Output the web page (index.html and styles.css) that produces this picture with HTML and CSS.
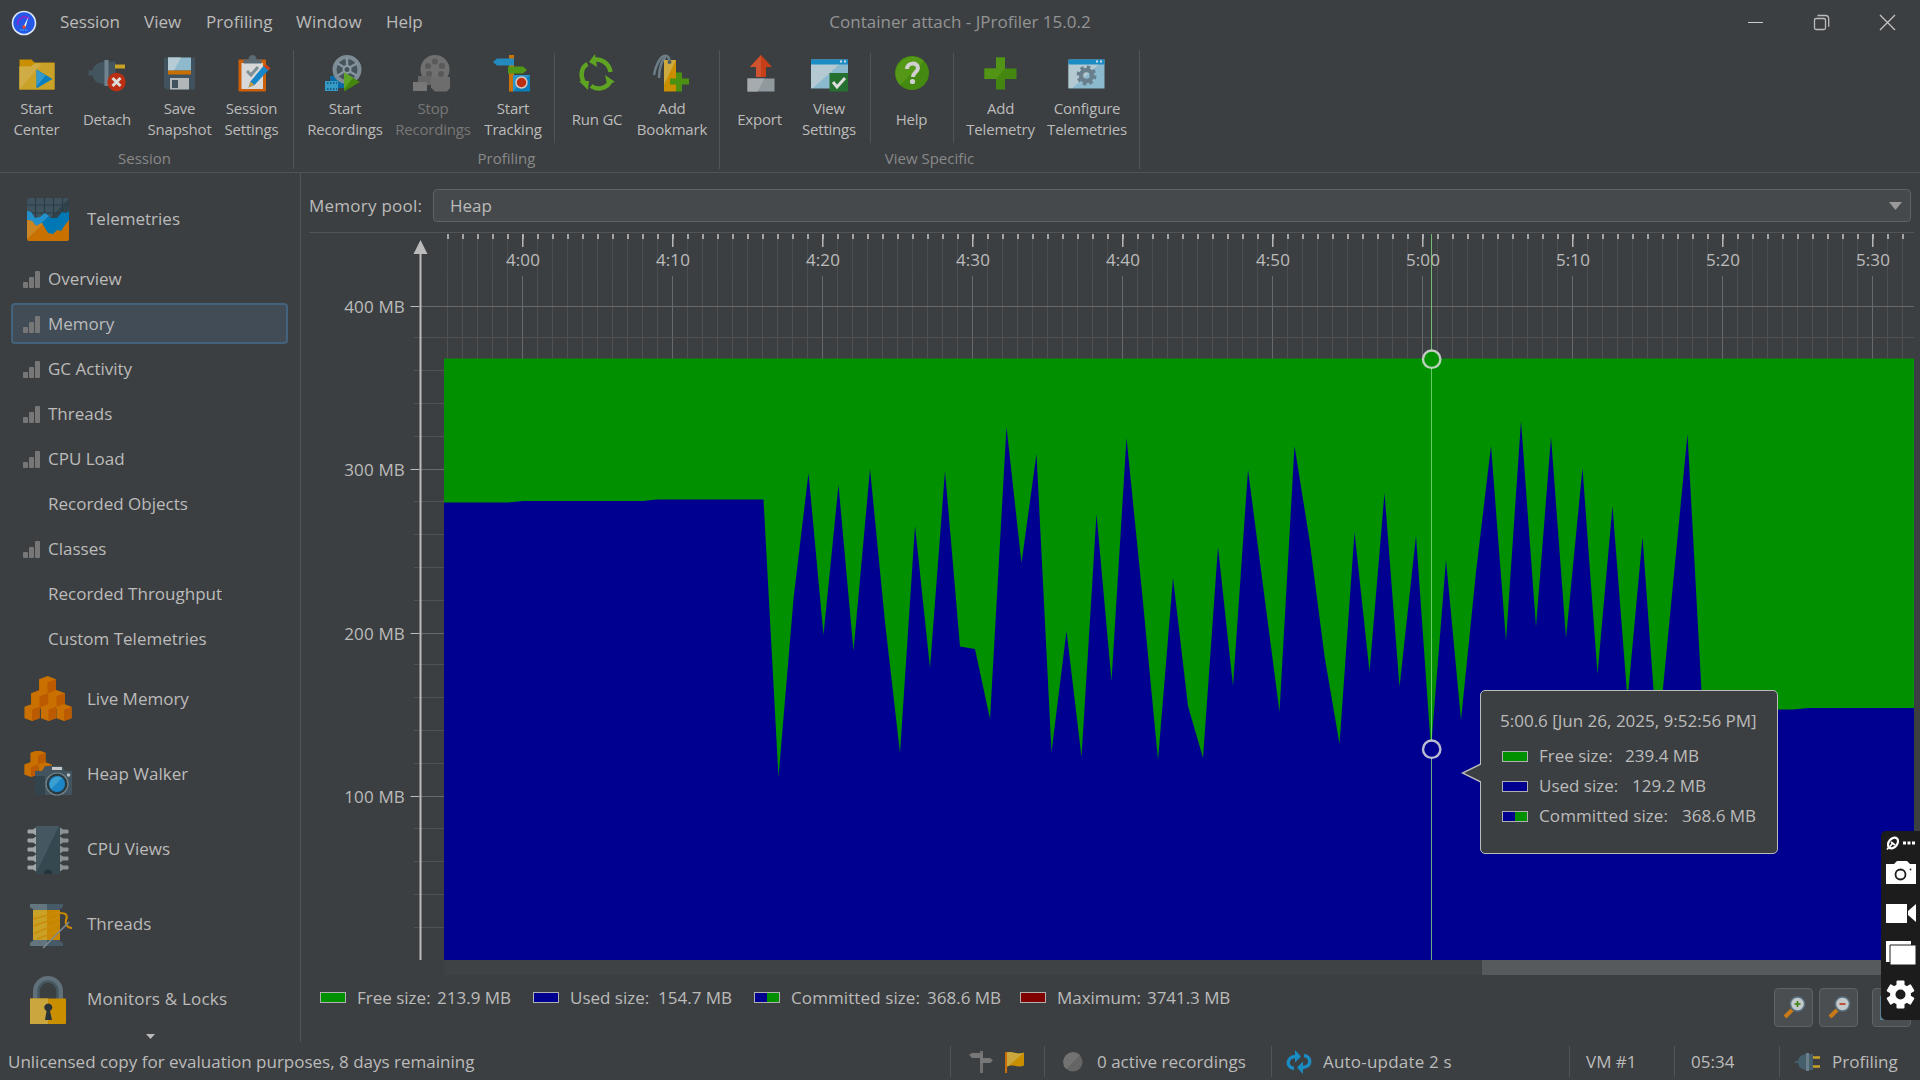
FILE: index.html
```html
<!DOCTYPE html>
<html lang="en">
<head>
<meta charset="utf-8">
<title>Container attach - JProfiler 15.0.2</title>
<link rel="stylesheet" href="styles.css">
</head>
<body>
<svg class="defs" width="0" height="0" aria-hidden="true">
  <symbol id="bars" viewBox="0 0 17 17"><g fill="#777"><rect x="0" y="11" width="5" height="6" rx="1"/><rect x="6" y="6" width="5" height="11" rx="1"/><rect x="12" y="0" width="5" height="17" rx="1"/></g></symbol>
  <symbol id="cube" viewBox="0 0 16 18"><path d="M0 3l8-3 8 3v12l-8 3-8-3z" fill="#c97000"/><path d="M8 6l8-3v12l-8 3z" fill="#bb5a00"/></symbol>
</svg>

<header class="titlebar">
  <nav class="menu">
    <svg class="logo" width="26" height="26" viewBox="0 0 26 26"><circle cx="13" cy="13" r="11.500" fill="#2459e8" stroke="#dce8f8" stroke-width="1.600"/><path d="M7 15a6.500 6.500 0 0 1 11-6" fill="none" stroke="#7a2fd0" stroke-width="2"/><path d="M17.500 6.500l-3 11-2-1z" fill="#e8f4ff"/><circle cx="13" cy="17" r="1.800" fill="#e8452c"/><path d="M9 20h8" stroke="#3aa0f0" stroke-width="1.500" stroke-dasharray="1.500 1"/></svg>
    <span class="m1">Session</span><span class="m2">View</span><span class="m3">Profiling</span><span class="m4">Window</span><span>Help</span>
  </nav>
  <h1 class="title">Container attach - JProfiler 15.0.2</h1>
  <div class="winctl">
    <svg width="66" height="45"><path d="M26 22.500h15" stroke="#ccc"/></svg>
    <svg width="66" height="45" fill="none" stroke="#bbb" stroke-width="1.300"><rect x="26.500" y="18.500" width="11" height="11" rx="1.500"/><path d="M29.500 15.500h8a3.200 3.200 0 0 1 3.200 3.200v8"/></svg>
    <svg width="66" height="45"><path d="M26 15l15 15M41 15l-15 15" stroke="#c4c4c4" stroke-width="1.300"/></svg>
  </div>
</header>

<section class="toolbar">
  <div class="group g-session">
    <div class="tools">
      <div class="tool t-center"><svg viewBox="1 0 40 40"><path d="M3.500 6.500h12l3 3h20v27h-35z" fill="#c98f00"/><path d="M3.500 13h12l3-3h20v26.500h-35z" fill="#c9a227"/><path d="M3.500 14v22.500l22-26h-7l-3 3z" fill="#d0ac45"/><path d="M20.500 16.500v19l16-9.500z" fill="#0a7fc0"/><path d="M20.500 16.500v17l9-11z" fill="#3598c8"/></svg><span>Start<br>Center</span></div>
      <div class="tool t-detach"><svg viewBox="0 0 40 40"><path d="M1.500 17.500h4c1-6 6-8 12-9v-1.500h4v1.500h7v23h-7v1.500h-4v-1.500c-6-1-11-3-12-9h-4z" fill="#435660"/><path d="M17.500 7h4v26h-4z" fill="#70838e"/><path d="M28 11.500h10v4h-10z" fill="#c9a227"/><circle cx="29.500" cy="29" r="9.200" fill="#bd2f12"/><path d="M25.500 25l8 8m0-8l-8 8" stroke="#ddd" stroke-width="3"/></svg><span>Detach</span></div>
      <div class="tool t-save"><svg viewBox="0 0 40 40"><path d="M4 4.500h31v32h-29l-2-2z" fill="#3f525d"/><path d="M8 4.500h23v13h-23z" fill="#8fb9cd"/><path d="M8 4.500h13l-7 13h-6z" fill="#b7cbd5"/><path d="M8 17.500h23v4h-23z" fill="#c97000"/><path d="M10 25h19v11.500h-19z" fill="#b2b8ba"/><path d="M12 27h6v8h-6z" fill="#3f525d"/></svg><span>Save<br>Snapshot</span></div>
      <div class="tool t-settings"><svg viewBox="0 0 40 40"><rect x="6.500" y="6.500" width="27.500" height="32" rx="1" fill="#cc5f08"/><path d="M9.500 10h21.500v26h-21.500z" fill="#d8d8d8"/><path d="M11.500 10.500v-4h5c0-6 8-6 8 0h5v4z" fill="#596a75"/><path d="M15 18l4 4 7-8" fill="none" stroke="#7d9096" stroke-width="3"/><path d="M31.500 13l5 4-14 15-6 2.500 2-6z" fill="#1686c8"/><path d="M31.500 13l3-1.500 4 4-2 2z" fill="#c9441c"/><path d="M18.500 28.500l4 3.500-6 2.500z" fill="#c99a40"/></svg><span>Session<br>Settings</span></div>
    </div>
    <div class="caption">Session</div>
  </div>
  <div class="group g-prof">
    <div class="tools">
      <div class="tool t-rec"><svg viewBox="0 0 40 40"><path d="M5 23h14v12h-14z" fill="#0a6aa5"/><circle cx="22" cy="16.500" r="12.500" fill="#46535a" stroke="#7d8c95" stroke-width="4"/><circle cx="22" cy="16.500" r="3.500" fill="none" stroke="#8f9ca4" stroke-width="2"/><path d="M22 4v9M22 20v9M12 10l6.500 4M25.500 19l7 4M12 23l6.500-4M25.500 14l7-4" stroke="#8594a0" stroke-width="2.500"/><path d="M0 28h13v10h-13z" fill="#369ac6"/><path d="M2 30h10M2 36h10" stroke="#164e6e" stroke-width="1.500" stroke-dasharray="1.500 1.500"/><path d="M19 19.500v19l16-9.500z" fill="#43870f"/><path d="M19 19.500v17l9-12z" fill="#5fa326"/></svg><span>Start<br>Recordings</span></div>
      <div class="tool t-stop"><svg viewBox="0 0 40 40"><circle cx="22" cy="16.500" r="14.500" fill="#707070"/><g fill="#595959"><circle cx="22" cy="8.500" r="3"/><circle cx="15" cy="13" r="3"/><circle cx="29" cy="13" r="3"/><circle cx="16" cy="21" r="3"/><circle cx="28" cy="21" r="3"/></g><path d="M5 23h14v9h-14z" fill="#666"/><path d="M0 29h14v9h-14z" fill="#777"/><path d="M18 24h19v11l-3 3.500h-12l-4-4z" fill="#6d6d6d"/></svg><span>Stop<br>Recordings</span></div>
      <div class="tool t-track"><svg viewBox="0 0 40 40"><path d="M16 2h5v36.500h-5z" fill="#c8720a"/><path d="M0 9l4-3.500h17v7h-17z" fill="#248bc0"/><path d="M15 13.500h15l4 3.500-4 3.500h-15z" fill="#509718"/><path d="M20 22h17v16.500h-17z" fill="#0a7dbb"/><path d="M20 22h17l-17 16.500z" fill="#2c94c9"/><circle cx="28.500" cy="29.500" r="5.500" fill="#bd2f12" stroke="#d7c8c0" stroke-width="1.500"/></svg><span>Start<br>Tracking</span></div>
      <div class="tool t-gc"><svg viewBox="0 0 40 40"><g fill="none" stroke="#5fa323" stroke-width="4.500"><path d="M7.500 30c-5-7-3-16 3-19"/><path d="M16 7c8-2 16 3 17.500 12"/><path d="M34 27c-3 8-13 11-20 6"/></g><g fill="#5fa323"><path d="M18 1l-6 8 8 5z"/><path d="M2 28h10l-1 9z"/><path d="M28 22l10 7-8 2z"/></g></svg><span>Run GC</span></div>
      <div class="tool t-book"><svg viewBox="0 0 40 40"><path d="M2 22c1-8 6-18 10-19 4-1 6 2 5 6M7 25c0-9 3-20 7-20" fill="none" stroke="#6c7d87" stroke-width="2.500"/><path d="M12 7h12v31.500h-12z" fill="#c98f00"/><path d="M12 7h12l-12 25z" fill="#cda93e"/><circle cx="17.500" cy="9" r="2" fill="#4d5d66"/><path d="M24 19.500h6v6h7v6h-7v7h-6v-7h-6v-6h6z" fill="#4b9010"/></svg><span>Add<br>Bookmark</span></div>
    </div>
    <div class="caption">Profiling</div>
  </div>
  <div class="group g-view">
    <div class="tools">
      <div class="tool t-export"><svg viewBox="0 0 40 40"><path d="M21 2l11 12h-6v10h-10v-10h-6z" fill="#c63f18"/><path d="M21 2v22h-5v-10h-6z" fill="#d0532f"/><path d="M7.500 25.500h27v13h-27z" fill="#8f999e"/><path d="M7.500 25.500h17l-7 13h-10z" fill="#a5abae"/></svg><span>Export</span></div>
      <div class="tool t-vset"><svg viewBox="0 0 40 40"><path d="M2 6.500h37v29h-37z" fill="#8bb9ce"/><path d="M2 10h30l-28 25h-2z" fill="#b5c9d2"/><path d="M2 6.500h37v5h-37z" fill="#1c8cc4"/><path d="M31 8.500h2M35 8.500h2" stroke="#cde" stroke-width="2"/><path d="M20.500 20h18.500v18.500h-18.500z" fill="#257030"/><path d="M24 29l4 5 8-9" fill="none" stroke="#ddd" stroke-width="3"/></svg><span>View<br>Settings</span></div>
      <div class="tool t-help"><svg viewBox="0 0 40 40"><circle cx="20" cy="20" r="17" fill="#458a10"/><path d="M8 32a17 17 0 0 1 24-24z" fill="#559818"/><path d="M15 16c0-7 11-7 11-1 0 4-5 4-5 9" fill="none" stroke="#d0d0d0" stroke-width="4"/><circle cx="20.500" cy="28.500" r="2.600" fill="#d0d0d0"/></svg><span>Help</span></div>
      <div class="tool t-addtel"><svg viewBox="0 0 40 40"><path d="M15 4.500h9v11h11.500v10.500h-11.500v10.500h-9v-10.500h-11.500v-10.500h11.500z" fill="#438710"/><path d="M15 4.500h9v11l-9 10.500h-11.500v-10.500h11.500z" fill="#529516"/></svg><span>Add<br>Telemetry</span></div>
      <div class="tool t-conf"><svg viewBox="0 0 40 40"><path d="M1.500 6.500h36v29h-36z" fill="#8bb9ce"/><path d="M1.500 10h32l-28 25h-4z" fill="#b5c9d2"/><path d="M1.500 6.500h36v5h-36z" fill="#1c8cc4"/><path d="M29 8.500h2M33 8.500h2" stroke="#cde" stroke-width="2"/><circle cx="19.500" cy="22.500" r="5.500" fill="none" stroke="#69808c" stroke-width="4.500"/><circle cx="19.500" cy="22.500" r="8.500" fill="none" stroke="#69808c" stroke-width="3" stroke-dasharray="3.600 3.080"/></svg><span>Configure<br>Telemetries</span></div>
    </div>
    <div class="caption">View Specific</div>
  </div>
</section>

<main class="main">
  <aside class="sidebar">
    <div class="cat"><svg viewBox="0 1 48 48"><rect x="3" y="3" width="42" height="43" rx="2" fill="#3f535f"/><path d="M45 3v30h-28z" fill="#31434c"/><path d="M3 10h42M11.500 3v20M20.500 3v20M29.500 3v20M38.500 3v20M3 18h42" stroke="#2c3c45" stroke-width="1.200"/><path d="M3 16l4 1 4 6 5-1 5-4 6 5 6 0 5-6 4 1 3-2v27h-42z" fill="#0078b5"/><path d="M3 16l4 1 4 6 5-1 5-4 4 3-18 17h-4z" fill="#248fc9"/><path d="M3 25l5 1 4 5 6-3 6 10 5 1 4-4 4 1 4-6 4-5v19q0 2-2 2h-38q-2 0-2-2z" fill="#c87100"/><path d="M3 25l5 1 4 5 6-3 1 1-16 15z" fill="#cb8624"/></svg><span>Telemetries</span></div>
    <div class="item"><svg><use href="#bars"/></svg><span>Overview</span></div>
    <div class="item selected"><svg><use href="#bars"/></svg><span>Memory</span></div>
    <div class="item"><svg><use href="#bars"/></svg><span>GC Activity</span></div>
    <div class="item"><svg><use href="#bars"/></svg><span>Threads</span></div>
    <div class="item"><svg><use href="#bars"/></svg><span>CPU Load</span></div>
    <div class="item plain"><span>Recorded Objects</span></div>
    <div class="item"><svg><use href="#bars"/></svg><span>Classes</span></div>
    <div class="item plain"><span>Recorded Throughput</span></div>
    <div class="item plain"><span>Custom Telemetries</span></div>
    <div class="cat"><svg viewBox="0 0 48 48"><use href="#cube" x="15" y="0" width="17" height="19"/><use href="#cube" x="7" y="14" width="17" height="19"/><use href="#cube" x="24" y="14" width="17" height="19"/><use href="#cube" x="0" y="28" width="16" height="17"/><use href="#cube" x="16" y="28" width="17" height="17"/><use href="#cube" x="32" y="28" width="16" height="17"/></svg><span>Live Memory</span></div>
    <div class="cat"><svg viewBox="0 0 48 48"><use href="#cube" x="6" y="-1" width="16" height="17"/><use href="#cube" x="0" y="11" width="14" height="15"/><use href="#cube" x="14" y="11" width="14" height="15"/><path d="M11 20h7l3-5h17l3 5h7v24h-37z" fill="#42545f"/><path d="M11 25h10v19h-10z" fill="#33444d"/><path d="M28 16h10v3h-10z" fill="#c8c8c8"/><circle cx="33" cy="33" r="11" fill="#2b3940" stroke="#77868d" stroke-width="1.200"/><circle cx="33" cy="33" r="8" fill="#1b86c8"/><path d="M27 38a8 8 0 0 1 11-11z" fill="#3b9fd0"/><circle cx="44.500" cy="24" r="1.800" fill="#b8c0c4"/></svg><span>Heap Walker</span></div>
    <div class="cat"><svg viewBox="0 0 48 48"><g fill="#a0a5a8"><path d="M4 4h5l3-2v7l-3-2h-5zM4 13h5l3-2v7l-3-2h-5zM4 22h5l3-2v7l-3-2h-5zM4 31h5l3-2v7l-3-2h-5zM4 40h5l3-2v7l-3-2h-5z" stroke="#a0a5a8"/></g><g fill="#8b9296"><path d="M44 4h-5l-3-2v7l3-2h5zM44 13h-5l-3-2v7l3-2h5zM44 22h-5l-3-2v7l3-2h5zM44 31h-5l-3-2v7l3-2h5zM44 40h-5l-3-2v7l3-2h5z" stroke="#8b9296"/></g><rect x="12" y="0" width="24" height="48" rx="1" fill="#354850"/><path d="M12 0h23l-23 47z" fill="#455862"/><path d="M19.500 48a4.500 4.500 0 0 1 9 0z" fill="#263338"/></svg><span>CPU Views</span></div>
    <div class="cat"><svg viewBox="0 0 48 48"><path d="M6 3h33v3l-4 3h-25l-4-3z" fill="#465b67"/><path d="M6 3h17v6h-13l-4-3z" fill="#63757f"/><path d="M6 45h33v-3l-4-3h-25l-4 3z" fill="#465b67"/><path d="M6 45h17v-6h-13l-4 3z" fill="#63757f"/><path d="M9 9h27v30h-27z" fill="#c98700"/><path d="M9 9h14v30h-14z" fill="#c9a126"/><path d="M9 18l27-7M9 25l27-9M9 33l27-11M13 38l23-9" stroke="#c98c0c" stroke-width="1.800"/><path d="M36 12c6 0 8 2 6 7-1 4 1 8 6 8" fill="none" stroke="#c98700" stroke-width="2.200"/><path d="M45 21l-26 26 22-22z" fill="#7b8b94" stroke="#7b8b94" stroke-width="1.500"/></svg><span>Threads</span></div>
    <div class="cat"><svg viewBox="0 0 48 48"><path d="M12 24v-9a12 12 0 0 1 24 0v9" fill="none" stroke="#60717b" stroke-width="6"/><path d="M14.500 24v-9a9.500 9.500 0 0 1 19 0v9" fill="none" stroke="#465862" stroke-width="2.500"/><rect x="6" y="22.500" width="36" height="25.500" rx="1" fill="#c98f00"/><path d="M6 22.500h18v25.500h-18z" fill="#cba63c"/><path d="M21 44l1.500-9a4 4 0 1 1 3.500 0l2 9z" fill="#2a3438"/></svg><span class="wide">Monitors &amp; Locks</span></div>
    <div class="more"><svg width="9" height="5"><path d="M0 0h9l-4.500 5z" fill="#bbb"/></svg></div>
  </aside>

  <section class="content">
    <div class="poolbar">
      <label>Memory pool:</label>
      <div class="combo"><span>Heap</span><svg width="13" height="8"><path d="M0 0h13l-6.500 8z" fill="#999"/></svg></div>
    </div>
    <div class="plot">
      <svg class="chart" width="1611" height="728" viewBox="309 232 1611 728">
        <defs>
          <pattern id="minor" patternUnits="userSpaceOnUse" x="447" y="0" width="15" height="60"><rect width="1" height="60" fill="#505051"/></pattern>
          <pattern id="major" patternUnits="userSpaceOnUse" x="522" y="0" width="150" height="60"><rect width="1" height="60" fill="#68696a"/></pattern>
          <pattern id="tick" patternUnits="userSpaceOnUse" x="447" y="0" width="15" height="60"><rect width="2" height="60" fill="#a5a5a5"/></pattern>
          <pattern id="ticklong" patternUnits="userSpaceOnUse" x="522" y="0" width="150" height="60"><rect width="1.500" height="60" fill="#b5b5b5"/></pattern>
        </defs>
        <rect x="444" y="234" width="1470" height="42" fill="url(#minor)" opacity=".8"/>
        <g fill="#3c3f41"><rect x="521" y="247" width="4" height="29"/><rect x="671" y="247" width="4" height="29"/><rect x="821" y="247" width="4" height="29"/><rect x="971" y="247" width="4" height="29"/><rect x="1121" y="247" width="4" height="29"/><rect x="1271" y="247" width="4" height="29"/><rect x="1421" y="247" width="4" height="29"/><rect x="1571" y="247" width="4" height="29"/><rect x="1721" y="247" width="4" height="29"/><rect x="1871" y="247" width="4" height="29"/></g>
        <rect x="444" y="276" width="1470" height="83" fill="url(#minor)"/>
        <rect x="444" y="276" width="1470" height="83" fill="url(#major)"/>
        <rect x="444" y="234" width="1470" height="5" fill="url(#tick)"/>
        <rect x="444" y="234" width="1470" height="13" fill="url(#ticklong)"/>
        <path d="M414 337.500H1914M414 370.500h30M414 403.500h30M414 436.500h30M414 501.500h30M414 534.500h30M414 567.500h30M414 600.500h30M414 664.500h30M414 697.500h30M414 730.500h30M414 763.500h30M414 828.500h30M414 861.500h30M414 894.500h30M414 927.500h30" stroke="#525253"/>
        <path d="M421 306.500H1914M421 469.500h23M421 633.500h23M421 796.500h23" stroke="#68696a"/>
        <path d="M410.500 306.500h9M410.500 469.500h9M410.500 633.500h9M410.500 796.500h9" stroke="#bbb"/>
        <path d="M420.500 250v710" stroke="#bbb" stroke-width="2"/>
        <path d="M413.500 254h14l-7-14z" fill="#bbb"/>
        <g class="axis ylab"><text x="405" y="313">400 MB</text><text x="405" y="476">300 MB</text><text x="405" y="640">200 MB</text><text x="405" y="803">100 MB</text></g>
        <g class="axis xlab"><text x="523" y="265.500">4:00</text><text x="673" y="265.500">4:10</text><text x="823" y="265.500">4:20</text><text x="973" y="265.500">4:30</text><text x="1123" y="265.500">4:40</text><text x="1273" y="265.500">4:50</text><text x="1423" y="265.500">5:00</text><text x="1573" y="265.500">5:10</text><text x="1723" y="265.500">5:20</text><text x="1873" y="265.500">5:30</text></g>
        <rect x="444" y="358.500" width="1470" height="601.500" fill="#009000"/>
        <path fill="#000090" d="M444 960V502.500H508L523 501H643L657 499.500H763.500L778.500 777L793.700 597 808.500 473 823.500 635 838.500 485 853.500 651 870 469 885 622 900 753 915 526 930 668 945 471 960 646.500 975 649 990 719 1006.500 427 1021.500 563 1036.500 454 1051.500 752 1066.500 631 1081.500 757 1096.500 514 1111.500 681 1126.500 438 1142 592 1158 760 1173 578 1188 706 1203 758 1218 547 1233 686 1248 470 1279.500 712 1294.500 446 1309.500 540 1324.500 656 1339.500 744 1354.500 532 1369.500 672 1384.500 493 1399.500 687 1416 536 1431 749 1446 560 1461 720 1476 572 1491 446 1506 641 1521 421 1536 627 1551 437 1566 638 1582.500 468 1597.500 674 1612.500 506 1627.500 700 1642.500 537 1657.500 745 1687.500 434 1702.500 709.500H1793L1808 708H1914V960Z"/>
        <path d="M1431.500 234v726" stroke="#82d782" stroke-opacity=".8"/>
        <g stroke="#ddd" stroke-opacity=".85" stroke-width="2.400"><circle cx="1431.700" cy="359.200" r="8.700" fill="#009000"/><circle cx="1431.700" cy="749.200" r="8.700" fill="#000090"/></g>
      </svg>
      <div class="tooltip">
        <svg class="pointer" width="20" height="20" viewBox="0 0 20 20"><path d="M20 1L1.500 10L20 19" fill="#3c3f41" stroke="#bbb" stroke-width="1.400"/></svg>
        <p class="tt-head">5:00.6 [Jun 26, 2025, 9:52:56 PM]</p>
        <p><i class="sw free"></i><b class="k1">Free size:</b>239.4 MB</p>
        <p><i class="sw used"></i><b class="k2">Used size:</b>129.2 MB</p>
        <p><i class="sw both"></i><b class="k3">Committed size:</b>368.6 MB</p>
      </div>
    </div>
    <div class="scroll"><div class="thumb"></div></div>
    <div class="footer">
      <div class="legend">
        <span class="l1"><i class="sw free"></i><b>Free size:</b>213.9 MB</span>
        <span class="l2"><i class="sw used"></i><b>Used size:</b>154.7 MB</span>
        <span class="l3"><i class="sw both"></i><b>Committed size:</b>368.6 MB</span>
        <span class="l4"><i class="sw max"></i><b>Maximum:</b>3741.3 MB</span>
      </div>
      <div class="zoom">
        <button><svg width="24" height="24" viewBox="0 0 24 24"><path d="M3 21l7-7" stroke="#c97a18" stroke-width="4"/><circle cx="15.500" cy="8" r="7" fill="#c4cacc" stroke="#5b7482" stroke-width="1.500"/><path d="M12.500 8h6M15.500 5v6" stroke="#3a8010" stroke-width="1.600"/></svg></button>
        <button><svg width="24" height="24" viewBox="0 0 24 24"><path d="M3 21l7-7" stroke="#c97a18" stroke-width="4"/><circle cx="15.500" cy="8" r="7" fill="#c4cacc" stroke="#5b7482" stroke-width="1.500"/><path d="M12.500 8h6" stroke="#b93218" stroke-width="1.600"/></svg></button>
        <button class="fit"><svg width="24" height="24"><path d="M1 1h22v22h-22z" fill="none" stroke="#5b7f92" stroke-width="2"/></svg></button>
      </div>
    </div>
  </section>
</main>

<footer class="status">
  <div class="s0">Unlicensed copy for evaluation purposes, 8 days remaining</div>
  <div class="s1"><svg width="24" height="22" viewBox="0 0 24 22"><path d="M11 0h3v22h-3z" fill="#707070"/><path d="M0 4l3-2h11v5h-11zM11 7h10l3 2.500-3 2.500h-10z" fill="#777"/></svg><svg width="20" height="22" viewBox="0 0 20 22"><path d="M1 1v21" stroke="#c86c0c" stroke-width="2.200"/><path d="M2 1.500c6-2 9 3 17 0v13c-7 3-10-2-17 1z" fill="#c98f00"/><path d="M2 1.500c6-2 9 3 17 0l-15 13-2 1z" fill="#cba63c"/></svg></div>
  <div class="s2"><svg width="20" height="20"><circle cx="10" cy="10" r="9.500" fill="#656565"/><path d="M3 17a9.500 9.500 0 0 1 14-14z" fill="#727272"/></svg><span>0 active recordings</span></div>
  <div class="s3"><svg width="26" height="24" viewBox="0 0 26 24"><g fill="none" stroke="#1a8cc4" stroke-width="3.400"><path d="M8 18.500c-8-1-8-12 2-12"/><path d="M18 5.500c8 1 8 12-2 12"/></g><path d="M9 0l6 6.500-6 6zM17 11.500v12.500l-6-6.500z" fill="#1a8cc4"/></svg><span class="wide">Auto-update 2 s</span></div>
  <div class="s4">VM #1</div>
  <div class="s5">05:34</div>
  <div class="s6"><svg width="26" height="18" viewBox="0 0 26 18"><path d="M0 8h3c1-5 4-6 8-7h7v16h-7c-4-1-7-2-8-7h-3z" fill="#465f6c"/><path d="M11 0h3v18h-3z" fill="#6b7f8a"/><path d="M18 4.500h7M18 13.500h7" stroke="#c9a227" stroke-width="2.600"/></svg><span>Profiling</span></div>
</footer>

<aside class="recorder">
  <svg width="39" height="189" viewBox="1881 831 39 189">
    <g fill="none" stroke="#fff"><ellipse cx="1893" cy="843" rx="6" ry="4.200" transform="rotate(-50 1893 843)" stroke-width="2.200"/><path d="M1887 849.500l6-6.500M1891 842l4 3" stroke-width="1.800"/><path d="M1903 843h13" stroke-width="3" stroke-dasharray="3 1.500"/></g>
    <path d="M1886 865h8l3-3h10l3 3h5v19h-29z" transform="translate(0 -1)" fill="#fff"/><path d="M1886 864h30v20h-30z" fill="#fff"/><circle cx="1900.500" cy="874.500" r="5" fill="#fff" stroke="#1c1c1c" stroke-width="1.800"/><circle cx="1910.500" cy="869.500" r=".9" fill="#1c1c1c"/>
    <path d="M1886 904h21v19h-21zM1908 911l8-7v18l-8-7z" fill="#fff"/>
    <path d="M1886 941h25v21h-25z" fill="#fff"/><path d="M1890 945h26v20h-26z" fill="#fff" stroke="#1c1c1c"/>
    <g fill="#fff"><circle cx="1900.500" cy="994.500" r="10.500"/><rect x="1896.500" y="980.500" width="8" height="28" rx="1"/><rect x="1896.500" y="980.500" width="8" height="28" rx="1" transform="rotate(60 1900.500 994.500)"/><rect x="1896.500" y="980.500" width="8" height="28" rx="1" transform="rotate(120 1900.500 994.500)"/></g><circle cx="1900.500" cy="994.500" r="5" fill="#1c1c1c"/>
  </svg>
</aside>
</body>
</html>
```
FILE: styles.css
```css
* { box-sizing: border-box; }
html, body { height: 100%; }
body {
  margin: 0;
  width: 1920px;
  height: 1080px;
  overflow: hidden;
  display: flex;
  flex-direction: column;
  background: #3c3f41;
  color: #bbb;
  font: 17px/1 "Open Sans", "Noto Sans", sans-serif;
  position: relative;
}
svg { display: block; flex: none; }
.defs { position: absolute; }
p, h1 { margin: 0; font-weight: normal; }
b { font-weight: normal; }
i { font-style: normal; }

/* title bar */
.titlebar { height: 45px; display: grid; grid-template-columns: 1fr auto 1fr; align-items: center; }
.menu { display: flex; align-items: center; padding-left: 11px; }
.menu span { line-height: 24px; padding-bottom: 1px; white-space: nowrap; }
.logo { margin-right: 23px; }
.m1 { width: 84px; }
.m2 { width: 62px; }
.m3 { width: 90px; letter-spacing: .1px; }
.m4 { width: 90px; letter-spacing: .3px; }
.title { font-size: 17px; line-height: 24px; padding-bottom: 1px; color: #939495; }
.winctl { display: flex; justify-content: flex-end; }

/* toolbar */
.toolbar { height: 128px; display: flex; border-bottom: 1px solid #515354; padding-top: 5px; font-size: 15px; }
.group { height: 119px; border-right: 1px solid #515354; display: flex; flex-direction: column; }
.g-session { width: 294px; }
.g-prof { width: 426px; }
.g-view { width: 420px; }
.tools { display: flex; height: 93px; padding-top: 3px; }
.tool { display: flex; flex-direction: column; align-items: center; flex: none; height: 90px; }
.tool svg { width: 40px; height: 40px; }
.tool span { height: 42px; margin-top: 5px; line-height: 21px; display: flex; align-items: center; text-align: center; white-space: nowrap; letter-spacing: -.2px; }
.t-center { width: 73px; }
.t-detach { width: 68px; }
.t-save { width: 77px; }
.t-settings { width: 67px; }
.t-rec { width: 88px; margin-left: 7px; }
.t-stop { width: 88px; color: #777; }
.t-track { width: 72px; }
.t-gc { width: 77px; padding-left: 7px; margin-left: 6px; box-shadow: -1px 0 #515354; }
.t-book { width: 80px; }
.t-export { width: 61px; margin-left: 9px; }
.t-vset { width: 78px; }
.t-help { width: 73px; margin-left: 3px; padding-left: 8px; box-shadow: -1px 0 #515354; }
.t-addtel { width: 90px; margin-left: 10px; padding-left: 3px; box-shadow: -1px 0 #515354; }
.t-conf { width: 86px; }
.caption { height: 26px; line-height: 31px; text-align: center; color: #88898a; }
.g-session .caption { padding-right: 4px; }

/* main area */
.main { height: 870px; display: flex; }
.sidebar { width: 301px; height: 869px; border-right: 1px solid #515354; padding-top: 9px; overflow: hidden; flex: none; }
.cat { height: 75px; display: flex; align-items: center; padding-left: 24px; gap: 15px; line-height: 24px; }
.cat svg { width: 48px; height: 48px; }
.cat span, .item span { padding-bottom: 1px; }
.item { height: 45px; display: flex; align-items: center; padding-left: 23px; line-height: 24px; }
.item svg { width: 17px; height: 17px; margin-right: 8px; }
.item.plain { padding-left: 48px; }
.item.selected { height: 41px; margin: 1px 12px 3px 11px; padding: 2px 0 0 10px; border: 2px solid #43627c; border-radius: 4px; background: #414c56; }
.more { display: flex; justify-content: center; }
.wide { letter-spacing: .2px; }
.more svg { margin-top: -3px; }

.content { flex: 1; display: flex; flex-direction: column; min-width: 0; padding-left: 8px; }
.poolbar { height: 60px; width: 1605px; border-bottom: 1px solid #515354; display: flex; align-items: flex-start; padding-top: 16px; }
.poolbar label { width: 124px; line-height: 33px; letter-spacing: .25px; }
.combo { flex: none; width: 1478px; height: 33px; border: 1px solid #5f6265; border-radius: 4px; background: #45494b; display: flex; align-items: center; justify-content: space-between; padding: 0 8px 0 16px; }
.combo span { line-height: 24px; }
.plot { height: 727px; margin-top: -1px; position: relative; }
.chart { display: block; }
.axis { fill: #bbb; font-size: 17px; letter-spacing: .15px; }
.ylab { text-anchor: end; }
.xlab { text-anchor: middle; }

.tooltip { position: absolute; left: 1171px; top: 458px; width: 298px; height: 164px; border: 1px solid #bbb; border-radius: 5px; background: #3c3f41; padding: 15px 0 0 19px; }
.pointer { position: absolute; left: -20px; top: 72px; }
.tooltip p { height: 30px; line-height: 30px; display: flex; align-items: center; white-space: nowrap; }
.tooltip .tt-head { height: 35px; align-items: flex-start; }
.tooltip .sw { margin: 0 11px 0 2px; }
.k1 { width: 86px; }
.k2 { width: 93px; }
.k3 { width: 143px; letter-spacing: .1px; }

.sw { width: 26px; height: 11px; border: 1px solid #b0b0b0; flex: none; margin-right: 11px; }
.free { background: #009000; }
.used { background: #000090; }
.both { background: linear-gradient(90deg, #000090 50%, #009000 50%); }
.max { background: #800000; }

.scroll { margin-left: 135px; width: 1470px; height: 15px; margin-top: 1px; background: #3f4244; display: flex; justify-content: flex-end; flex: none; }
.thumb { width: 432px; background: #565a5d; }

.footer { display: flex; justify-content: space-between; height: 67px; padding: 0 9px 0 11px; }
.legend { display: flex; padding-top: 10px; }
.legend > span { display: flex; align-items: center; height: 24px; white-space: nowrap; }
.l1 { width: 213px; }
.l2 { width: 221px; }
.l3 { width: 267px; }
.legend .l1 b { width: 80px; }
.legend .l2 b { width: 88px; }
.legend .l3 b { width: 136px; letter-spacing: .1px; }
.legend .l4 { letter-spacing: -.05px; margin-left: -1px; }
.legend .l4 b { width: 90px; }
.zoom { display: flex; gap: 6px; padding-top: 13px; }
.zoom button { width: 39px; height: 39px; border: 1px solid #606263; border-radius: 4px; background: #4b4e50; padding: 0; display: flex; align-items: center; justify-content: center; }
.zoom .fit { margin-left: 8px; }

/* status bar */
.status { height: 37px; display: flex; line-height: 24px; padding-top: 3px; }
.status > div { height: 31px; display: flex; align-items: center; white-space: nowrap; }
.status > div + div { border-left: 1px solid #515354; }
.status .s0 { width: 950px; padding-left: 8px; }
.status .s1 { width: 94px; padding-left: 18px; gap: 12px; }
.status .s2 { width: 227px; padding-left: 18px; gap: 14px; }
.status .s3 { width: 298px; padding-left: 14px; gap: 11px; }
.status .s4 { width: 105px; padding-left: 16px; }
.status .s5 { width: 105px; padding-left: 16px; }
.status .s6 { width: 141px; padding-left: 15px; gap: 11px; }

/* floating capture strip */
.recorder { position: absolute; right: 0; top: 831px; width: 39px; height: 189px; background: #1c1c1c; border-radius: 5px 0 0 5px; }
```
